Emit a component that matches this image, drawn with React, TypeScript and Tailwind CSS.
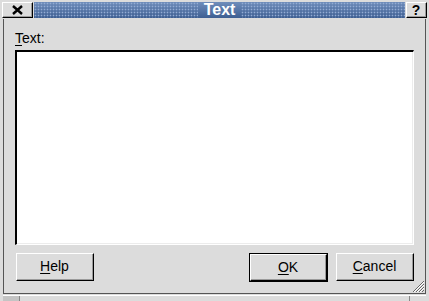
import React from 'react';

function Bevel({ children, className = '' }: { children?: React.ReactNode; className?: string }) {
    return (
        <div className={`border-t border-l border-t-white border-l-white border-r border-b border-r-black border-b-black ${className}`}>
            <div className="w-full h-full border-r border-b border-r-[#9a9a9a] border-b-[#9a9a9a] flex items-center justify-center">
                {children}
            </div>
        </div>
    );
}

function Button({ label, mnemonic, isDefault = false }: { label: string; mnemonic: number; isDefault?: boolean }) {
    const text = (
        <span className="text-[14px] text-black">
            {label.slice(0, mnemonic)}
            <span className="underline underline-offset-2">{label[mnemonic]}</span>
            {label.slice(mnemonic + 1)}
        </span>
    );
    if (isDefault) {
        return (
            <div className="w-[79px] h-[29px] border border-black">
                <Bevel className="w-full h-full">{text}</Bevel>
            </div>
        );
    }
    return <Bevel className="w-[78px] h-[28px]">{text}</Bevel>;
}

export default function App() {
    return (
        <div className="w-[429px] h-[301px] bg-[#dcdcdc] flex flex-col overflow-hidden font-['Liberation_Sans',Arial,sans-serif]">
            {/* title bar */}
            <div className="h-[19px] flex items-stretch pt-[2px] pb-[1px] pl-[2px] pr-[2px] gap-[1px]">
                <Bevel className="w-[31px]">
                    <svg width="11" height="10" viewBox="0 0 11 10">
                        <path d="M1 1 L10 9 M10 1 L1 9" stroke="#000" strokeWidth="2.4" />
                    </svg>
                </Bevel>
                <div className="flex-1 flex items-center justify-center bg-[radial-gradient(circle,#93acd4_0.7px,transparent_1.1px),linear-gradient(#6f8dbb,#3e5f92)] bg-[length:3px_3px,100%_100%]">
                    <span className="h-full flex items-center px-[6px] bg-[linear-gradient(#6f8dbb,#3e5f92)] text-white font-bold text-[16px] leading-none">
                        Text
                    </span>
                </div>
                <Bevel className="w-[21px]">
                    <span className="font-bold text-[14px] leading-none text-black">?</span>
                </Bevel>
            </div>

            {/* body */}
            <div className="flex-1 flex px-[3px]">
                <div className="flex-1 border-l border-r border-l-[#555] border-r-[#555] flex flex-col pt-[11px] px-[11px]">
                    <div className="text-[14px] leading-[17px] text-black h-[20px]">
                        <span className="underline underline-offset-2">T</span>ext:
                    </div>
                    <div className="h-[195px] border-t-2 border-l-2 border-t-black border-l-black border-b border-r border-b-white border-r-white bg-white shadow-[inset_-1px_-1px_0_#ececec]" />
                    <div className="flex items-start mt-[8px] pl-[1px]">
                        <Button label="Help" mnemonic={0} />
                        <div className="flex-1" />
                        <Button label="OK" mnemonic={0} isDefault />
                        <div className="w-[8px]" />
                        <Button label="Cancel" mnemonic={0} />
                    </div>
                </div>
            </div>

            {/* bottom frame */}
            <div className="h-[9px] px-[3px] flex flex-col relative">
                <div className="h-[2px] border-l border-r border-b border-l-[#555] border-r-[#555] border-b-[#555]" />
                <div className="flex-1 flex border-t border-t-white mt-[1px]">
                    <div className="w-[17px] bg-[#c4c4c4] border-r border-r-[#888]" />
                    <div className="flex-1" />
                    <div className="w-[17px] border-l border-l-[#888]" />
                </div>
                <svg className="absolute right-[4px] bottom-[8px]" width="14" height="14" viewBox="0 0 14 14">
                    <path d="M13 2 L2 13 M13 5 L5 13 M13 8 L8 13 M13 11 L11 13" stroke="#666" strokeWidth="1" />
                    <path d="M13 3 L3 13 M13 6 L6 13 M13 9 L9 13" stroke="#fff" strokeWidth="1" />
                </svg>
            </div>
        </div>
    );
}
